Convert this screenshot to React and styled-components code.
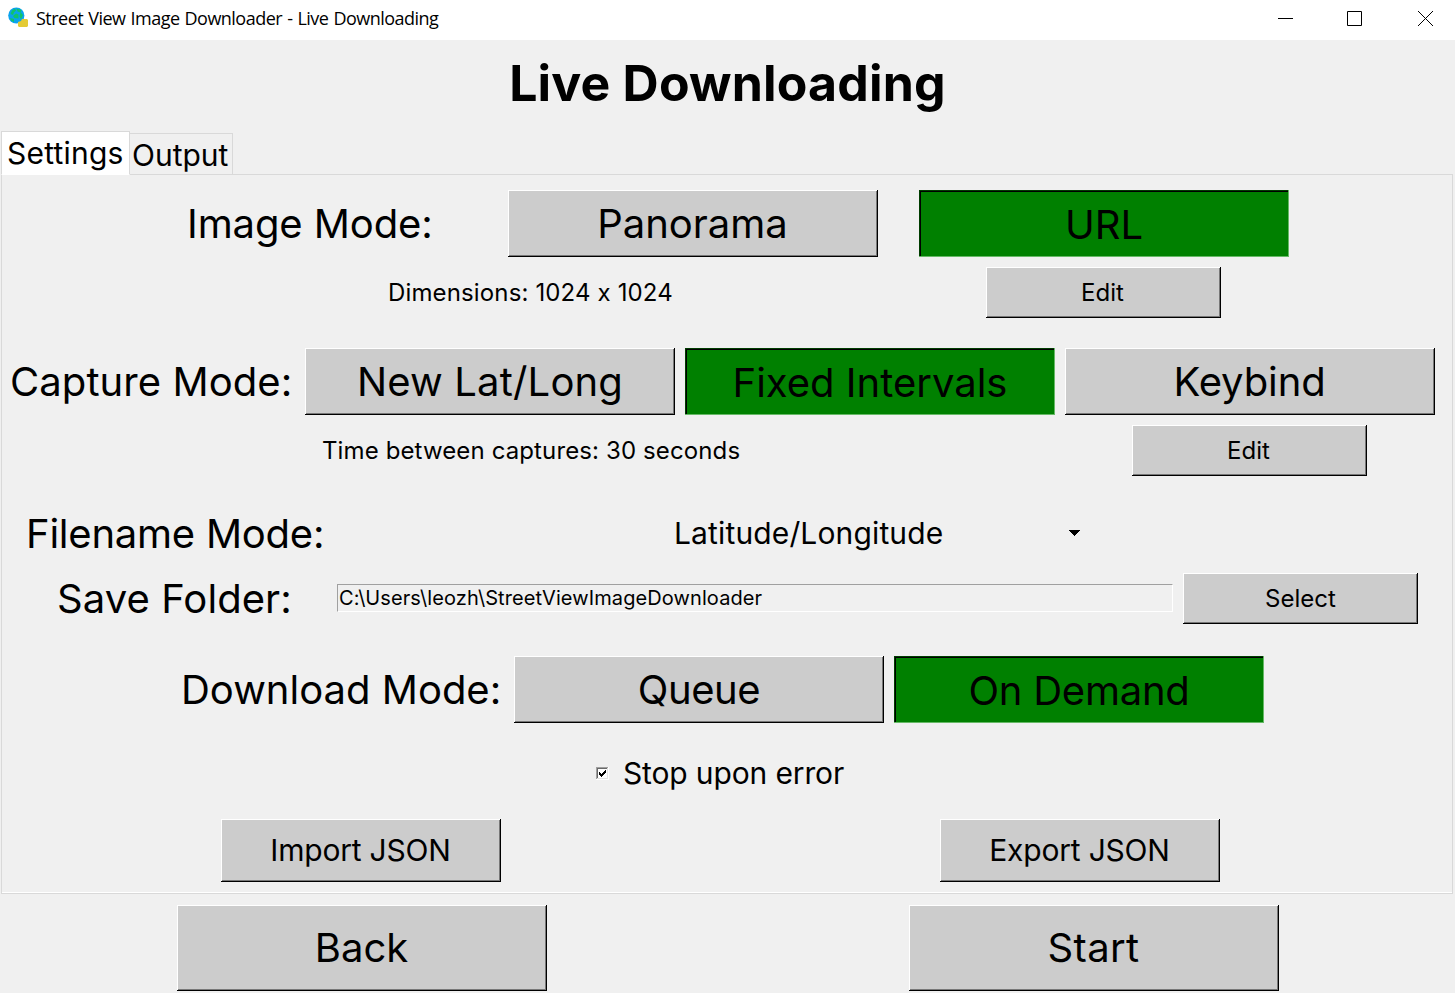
import React from "react";
import styled, { createGlobalStyle } from "styled-components";

const GlobalStyle = createGlobalStyle`
  * { box-sizing: border-box; }
  html, body { margin: 0; padding: 0; background: #f0f0f0; overflow: hidden; }
`;

const Window = styled.main`
  width: 1455px;
  height: 993px;
  display: flex;
  flex-direction: column;
  background: #f0f0f0;
  color: #000;
  font-family: Inter, "Liberation Sans", sans-serif;
  font-weight: 400;
  font-feature-settings: "calt" 0;
  white-space: nowrap;
`;

const TitleBar = styled.header`
  height: 40px;
  flex: none;
  display: flex;
  align-items: center;
  padding: 0 22px 4px 7px;
  background: #fff;
`;

const Caption = styled.span`
  flex: 1;
  margin-left: 7px;
  font: 400 18px/24px "Open Sans", "Noto Sans", sans-serif;
  letter-spacing: -0.52px;
  word-spacing: 0.9px;
`;

const WindowControls = styled.div`
  display: flex;
  gap: 54px;

  svg:last-child {
    margin-left: 2px;
  }
`;

const Heading = styled.h1`
  margin: 0;
  height: 91px;
  flex: none;
  padding-top: 12px;
  text-align: center;
  font-size: 50px;
  line-height: 62px;
  font-weight: 700;
  letter-spacing: 0.18px;
`;

const TabStrip = styled.div`
  display: flex;
  align-items: flex-end;
  height: 44px;
  flex: none;
  padding-left: 1px;
  margin-bottom: -1px;
`;

const Tab = styled.div`
  width: ${(p) => (p.$active ? 129 : 104)}px;
  height: ${(p) => (p.$active ? 44 : 42)}px;
  margin-left: ${(p) => (p.$active ? 0 : -1)}px;
  padding-left: ${(p) => (p.$active ? 5 : 2)}px;
  border: 1px solid #d9d9d9;
  border-bottom-color: ${(p) => (p.$active ? "#fff" : "#d9d9d9")};
  background: ${(p) => (p.$active ? "#fff" : "#f0f0f0")};
  position: relative;
  z-index: ${(p) => (p.$active ? 2 : 1)};
  font-size: 30px;
  line-height: 43px;
  letter-spacing: ${(p) => p.$tracking || 0}px;
`;

const Panel = styled.section`
  height: 720px;
  flex: none;
  margin: 0 2px 0 1px;
  padding-top: 15px;
  border: 1px solid #d9d9d9;
  box-shadow: inset 0 -1px 0 #fff;
  display: flex;
  flex-direction: column;
`;

const Row = styled.div`
  display: flex;
  flex: none;
  align-items: center;
  height: ${(p) => p.$h}px;
  margin-top: ${(p) => p.$mt || 0}px;
  padding-left: ${(p) => p.$indent}px;
  gap: ${(p) => p.$gap || 0}px;
`;

const Label = styled.span`
  flex: none;
  width: ${(p) => p.$w}px;
  padding-top: ${(p) => p.$drop || 0}px;
  padding-bottom: ${(p) => p.$lift || 0}px;
  font-size: ${(p) => p.$size || 40}px;
  line-height: 1.2;
  letter-spacing: ${(p) => p.$tracking || 0}px;
`;

const raised = `
  background: #ccc;
  box-shadow: inset -1px -1px 0 #000, inset 1px 1px 0 #fff, inset -2px -2px 0 #777;
`;
const sunken = `
  background: #008000;
  box-shadow: inset -1px -1px 0 #66b966, inset 1px 1px 0 #003c00, inset 2px 2px 0 #000;
  padding-top: 2px;
`;

const Button = styled.button`
  flex: none;
  display: flex;
  align-items: center;
  justify-content: center;
  border: 0;
  border-radius: 0;
  padding: 0 ${(p) => p.$nudge || 0}px ${(p) => p.$lift || 0}px 0;
  color: #000;
  font-family: inherit;
  font-weight: inherit;
  width: ${(p) => p.$w || 370}px;
  height: ${(p) => p.$h || 67}px;
  font-size: ${(p) => p.$size || 40}px;
  letter-spacing: ${(p) => p.$tracking || 0}px;
  ${(p) => (p.$on ? sunken : raised)}
`;

const SmallButton = styled(Button).attrs({ $w: 235, $h: 51, $size: 24 })``;

const PathField = styled.div`
  flex: none;
  width: 836px;
  height: 28px;
  margin-bottom: 2px;
  padding-left: 1px;
  border: 1px solid;
  border-color: #a0a0a0 #fff #fff #a0a0a0;
  font-size: 20px;
  line-height: 26px;
  letter-spacing: ${(p) => p.$tracking}px;
`;

const Logo = () => (
  <svg width="22" height="22" viewBox="0 0 22 22">
    <circle cx="9.3" cy="8.5" r="8.1" fill="#0aa3ee" />
    <path d="M5 3.5l3-2 1 2-2 2-1 2.500-2.500-1zM9.500 1.500l5 1.500-1 2.500-3-1zM6 9l3-2.500 2.500 1v4l-4-.5zM13.500 5l2.500 3-2 4.500-1.500-3zM3 11l4 1 0 3-3-1.500z" fill="#10c46a" />
    <path d="M11 15l3-1 1-2h5l1 1v6l-1 1h-8l-1-1z" fill="#e4cb35" />
  </svg>
);

const Check = () => (
  <svg width="13" height="13" viewBox="0 0 13 13" shapeRendering="crispEdges">
    <rect width="13" height="13" fill="#fff" />
    <path d="M0 0h12v1H1v11H0z" fill="#a0a0a0" />
    <path d="M1 1h10v1H2v9H1z" fill="#696969" />
    <path d="M11 1h1v11H1v-1h10z" fill="#e3e3e3" />
    <path d="M3 5h1v1h1v1h1V6h1V5h1V4h1V3h1v3H9v1H8v1H7v1H6v1H5V9H4V8H3z" fill="#000" />
  </svg>
);

const Arrow = () => (
  <svg width="11" height="6" viewBox="0 0 11 6" shapeRendering="crispEdges">
    <path d="M0 0h11v1h-1v1H9v1H8v1H7v1H6v1H5V5H4V4H3V3H2V2H1V1H0z" fill="#000" />
  </svg>
);

export default function App() {
  return (
    <Window>
      <GlobalStyle />
      <TitleBar>
        <Logo />
        <Caption>Street View Image Downloader - Live Downloading</Caption>
        <WindowControls>
          <svg width="15" height="15"><path d="M0 7.5h15" stroke="#000" /></svg>
          <svg width="15" height="15"><path d="M.5.5h14v14H.5z" fill="none" stroke="#000" /></svg>
          <svg width="15" height="15"><path d="M0 0l15 15M15 0L0 15" stroke="#000" /></svg>
        </WindowControls>
      </TitleBar>

      <Heading>Live Downloading</Heading>

      <TabStrip>
        <Tab $active $tracking={0.22}>Settings</Tab>
        <Tab>Output</Tab>
      </TabStrip>

      <Panel>
        <Row $h={67} $indent={185}>
          <Label $w={321} $tracking={-0.1}>Image Mode:</Label>
          <Row $h={67} $indent={0} $gap={41}>
            <Button $nudge={1}>Panorama</Button>
            <Button $on>URL</Button>
          </Row>
        </Row>
        <Row $h={51} $mt={10} $indent={386}>
          <Label $w={598} $size={24} $drop={2} $tracking={0.14}>Dimensions: 1024 x 1024</Label>
          <SmallButton $nudge={2}>Edit</SmallButton>
        </Row>
        <Row $h={67} $mt={30} $indent={8}>
          <Label $w={295} $tracking={0.07}>Capture Mode:</Label>
          <Row $h={67} $indent={0} $gap={10}>
            <Button $tracking={0.17}>New Lat/Long</Button>
            <Button $on>Fixed Intervals</Button>
            <Button $nudge={1} $tracking={-0.1}>Keybind</Button>
          </Row>
        </Row>
        <Row $h={51} $mt={10} $indent={320}>
          <Label $w={810} $size={24} $drop={2} $tracking={0.12}>Time between captures: 30 seconds</Label>
          <SmallButton $nudge={2}>Edit</SmallButton>
        </Row>
        <Row $h={49} $mt={32} $indent={24}>
          <Label $w={648} $drop={2} $tracking={-0.23}>Filename Mode:</Label>
          <Label $w={395} $size={30} $tracking={0.14}>Latitude/Longitude</Label>
          <Arrow />
        </Row>
        <Row $h={51} $mt={16} $indent={55}>
          <Label $w={280} $tracking={0.08}>Save Folder:</Label>
          <Row $h={51} $indent={0} $gap={10}>
            <PathField $tracking={0.1}>C:\Users\leozh\StreetViewImageDownloader</PathField>
            <SmallButton>Select</SmallButton>
          </Row>
        </Row>
        <Row $h={67} $mt={32} $indent={179}>
          <Label $w={333}>Download Mode:</Label>
          <Row $h={67} $indent={0} $gap={10}>
            <Button $tracking={-0.45}>Queue</Button>
            <Button $on $tracking={-0.25}>On Demand</Button>
          </Row>
        </Row>
        <Row $h={37} $mt={32} $indent={594} $gap={14}>
          <Check />
          <Label $w={230} $size={30} $lift={2} $tracking={-0.14}>Stop upon error</Label>
        </Row>
        <Row $h={63} $mt={27} $indent={219} $gap={439}>
          <Button $w={280} $h={63} $size={30} $lift={2} $nudge={1} $tracking={-0.2}>Import JSON</Button>
          <Button $w={280} $h={63} $size={30} $lift={2} $nudge={1} $tracking={-0.2}>Export JSON</Button>
        </Row>
      </Panel>

      <Row $h={86} $mt={11} $indent={177} $gap={362}>
        <Button $h={86} $lift={2} $nudge={1}>Back</Button>
        <Button $h={86} $lift={2} $nudge={1} $tracking={0.4}>Start</Button>
      </Row>
    </Window>
  );
}
